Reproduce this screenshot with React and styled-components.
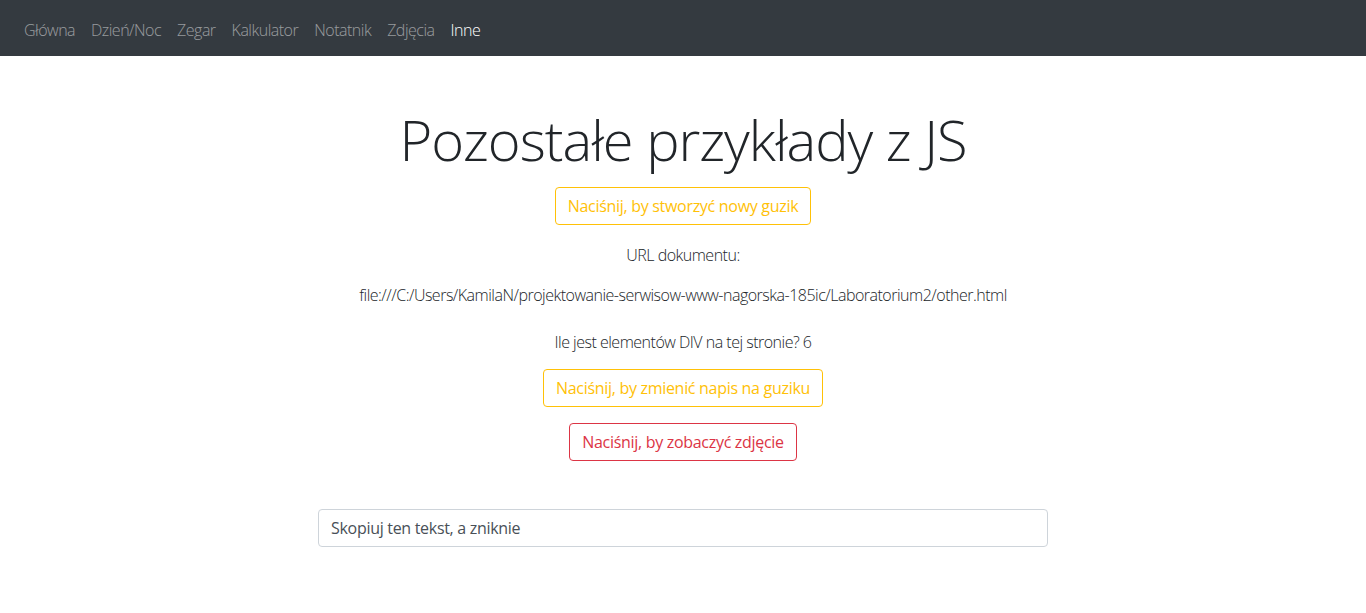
import styled, { createGlobalStyle } from 'styled-components'

const GlobalStyle = createGlobalStyle`
   body {
      margin: 0;
      font-family: "Open Sans", "Noto Sans", "Liberation Sans", sans-serif;
      font-size: 16px;
      line-height: 1.5;
      color: #212529;
      background: #fff;
   }
`

const links = ["Główna", "Dzień/Noc", "Zegar", "Kalkulator", "Notatnik", "Zdjęcia", "Inne"]

function App() {
   return (
      <>
         <GlobalStyle />
         <NavBar>
            {links.map((name) => (
               <NavLink key={name} active={name === "Inne"}>{name}</NavLink>
            ))}
         </NavBar>
         <Main>
            <Title>Pozostałe przykłady z JS</Title>
            <OutlineButton color="#ffc107">Naciśnij, by stworzyć nowy guzik</OutlineButton>
            <Text top="18px">URL dokumentu:</Text>
            <Text top="16px">file:///C:/Users/KamilaN/projektowanie-serwisow-www-nagorska-185ic/Laboratorium2/other.html</Text>
            <Text top="23px">Ile jest elementów DIV na tej stronie? 6</Text>
            <OutlineButton color="#ffc107" top="15px">Naciśnij, by zmienić napis na guziku</OutlineButton>
            <OutlineButton color="#dc3545" top="16px">Naciśnij, by zobaczyć zdjęcie</OutlineButton>
            <TextInput defaultValue="Skopiuj ten tekst, a zniknie" />
         </Main>
      </>
   )
}

export default App

const NavBar = styled.nav`
   box-sizing: border-box;
   display: flex;
   align-items: center;
   height: 56px;
   padding: 3px 16px 0;
   background-color: #343a40;
`

const NavLink = styled.a`
   padding: 8px;
   font-size: 16px;
   font-weight: 300;
   letter-spacing: -0.5px;
   color: ${(props) => (props.active ? "#fff" : "rgba(255, 255, 255, 0.5)")};
   cursor: pointer;
`

const Main = styled.main`
   display: flex;
   flex-direction: column;
   align-items: center;
   padding-top: 50px;
`

const Title = styled.h1`
   margin: 0 0 14px;
   font-size: 56px;
   font-weight: 300;
   letter-spacing: -1px;
   line-height: 1.2;
`

const OutlineButton = styled.button`
   margin-top: ${(props) => props.top || "0"};
   padding: 6px 12px;
   font-family: inherit;
   font-size: 16px;
   line-height: 24px;
   letter-spacing: -0.3px;
   color: ${(props) => props.color};
   background: transparent;
   border: 1px solid ${(props) => props.color};
   border-radius: 4px;
`

const Text = styled.p`
   margin: ${(props) => props.top} 0 0;
   font-weight: 300;
   letter-spacing: -0.5px;
`

const TextInput = styled.input`
   box-sizing: border-box;
   width: 730px;
   height: 38px;
   margin-top: 48px;
   padding: 6px 12px;
   font-family: inherit;
   font-size: 16px;
   letter-spacing: -0.3px;
   color: #495057;
   border: 1px solid #ced4da;
   border-radius: 4px;
   outline: none;
`
